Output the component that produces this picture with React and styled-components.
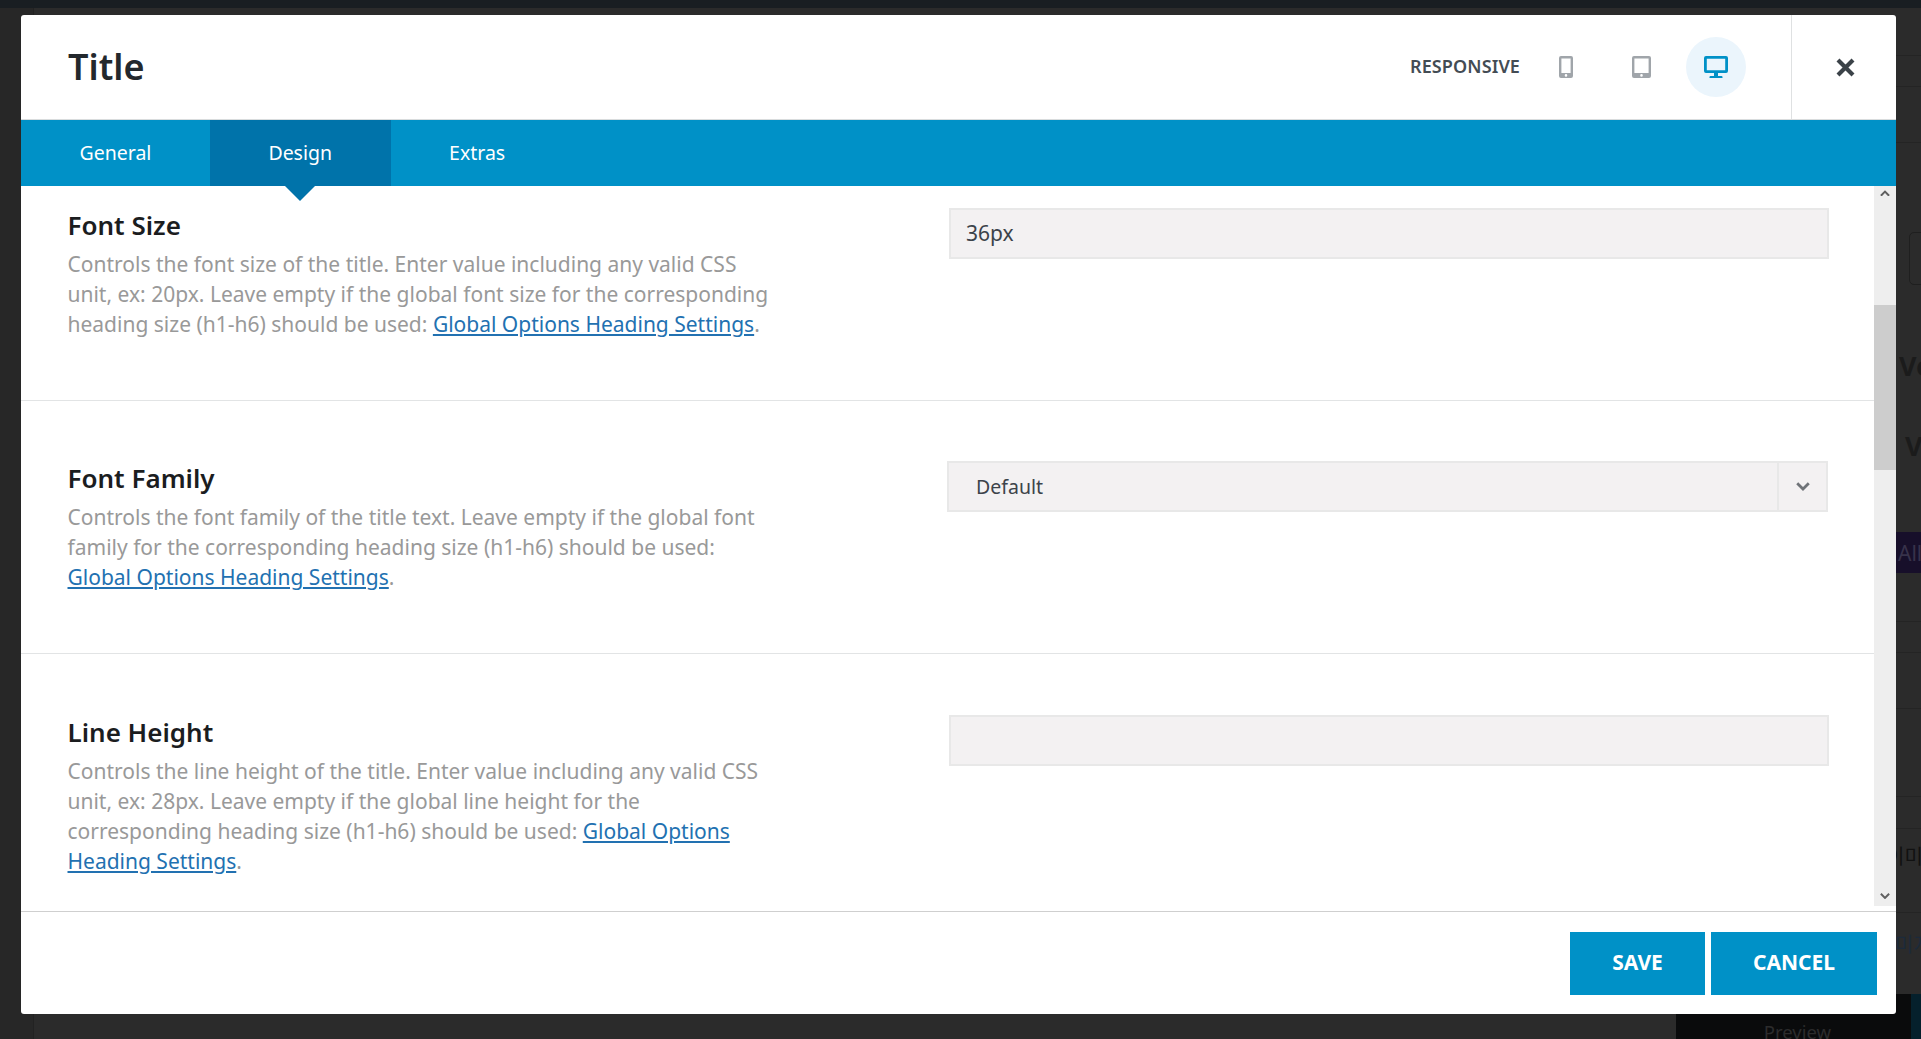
import React from "react";
import styled, { createGlobalStyle } from "styled-components";

const GlobalStyle = createGlobalStyle`
  html, body {
    margin: 0;
    padding: 0;
    height: 100%;
    overflow: hidden;
    background: #2a2a2a;
    font-family: "Noto Sans", "Open Sans", sans-serif;
  }
  * {
    box-sizing: border-box;
  }
`;

const Page = styled.div`
  position: relative;
  display: flex;
  flex-direction: column;
  height: 100vh;
  overflow: hidden;
`;

const AdminBar = styled.div`
  height: 8px;
  flex: none;
  background: #191e22;
`;

const Workspace = styled.div`
  flex: 1;
  display: flex;
  min-height: 0;
`;

const LeftRail = styled.div`
  width: 34px;
  flex: none;
  background: #272727;
  border-right: 1px solid #222;
`;

const Canvas = styled.div`
  flex: 1;
  display: flex;
  flex-direction: column;
  min-width: 0;
`;

const CanvasMain = styled.div`
  flex: 1;
  display: flex;
  justify-content: flex-end;
  min-height: 0;
  background: #2b2b2b;
`;

const EdgeColumn = styled.div`
  width: 25px;
  display: flex;
  flex-direction: column;
  overflow: hidden;
`;

const EdgeRow = styled.div`
  height: ${(p) => p.$h}px;
  flex: none;
  display: flex;
  align-items: center;
  padding-bottom: ${(p) => p.$lift || 0}px;
  white-space: nowrap;
  overflow: hidden;
  background: ${(p) => p.$bg || "transparent"};
  border-bottom: ${(p) => (p.$line ? "1px solid #242424" : "none")};
`;

const EdgeBox = styled.div`
  width: 40px;
  height: 53px;
  margin-left: 13px;
  flex: none;
  border: 1px solid #1f1f1f;
  border-radius: 5px;
`;

const EdgeHeading = styled.span`
  font-size: 27px;
  font-weight: 700;
  color: #1b1b1b;
  padding-left: ${(p) => p.$pad || 0}px;
`;

const EdgeLabel = styled.span`
  font-size: 21px;
  color: #37324a;
  padding-left: 2px;
`;

const EdgeKorean = styled.span`
  font-family: "Noto Sans CJK KR", "Noto Sans", sans-serif;
  font-size: 20px;
  color: ${(p) => p.$color};
  margin-left: ${(p) => p.$shift}px;
`;

const CanvasFooter = styled.div`
  height: 45px;
  flex: none;
  display: flex;
  justify-content: flex-end;
  background: #2b2b2b;
`;

const PreviewBar = styled.div`
  width: 245px;
  display: flex;
  justify-content: space-between;
  background: #0a0b0c;
`;

const PreviewLabel = styled.span`
  flex: 1;
  padding: 24px 0 0 8px;
  text-align: center;
  font-size: 18.5px;
  line-height: 27px;
  color: #2c2c2c;
`;

const PreviewEdge = styled.div`
  width: 10px;
  background: #05202c;
`;

const Modal = styled.div`
  position: absolute;
  top: 15px;
  left: 21px;
  width: 1875px;
  height: 999px;
  display: flex;
  flex-direction: column;
  background: #fff;
  border-radius: 3px;
  overflow: hidden;
`;

const Header = styled.header`
  height: 105px;
  flex: none;
  display: flex;
  align-items: stretch;
  padding-left: 47px;
  border-bottom: 1px solid #d9dcdd;
`;

const Title = styled.h2`
  flex: 1;
  margin: 0;
  align-self: center;
  font-size: 36px;
  font-weight: 600;
  line-height: 48px;
  color: #23282d;
`;

const ResponsiveBar = styled.div`
  display: flex;
  align-items: center;
  gap: 15px;
  margin-right: 45px;
`;

const ResponsiveLabel = styled.span`
  margin: 0 1px 2px 0;
  font-size: 18px;
  font-weight: 600;
  letter-spacing: 0.1px;
  color: #434c54;
`;

const DeviceButton = styled.button`
  width: 60px;
  height: 60px;
  display: flex;
  align-items: center;
  justify-content: center;
  padding: 0;
  border: 0;
  border-radius: 50%;
  background: ${(p) => (p.$active ? "#ebf5fc" : "transparent")};
  color: ${(p) => (p.$active ? "#0091c7" : "#a0a5aa")};
`;

const CloseButton = styled.button`
  width: 105px;
  display: flex;
  align-items: center;
  justify-content: center;
  padding: 0 0 0 2px;
  background: none;
  border: 0;
  border-left: 1px solid #dfe1e2;
  color: #3b4248;
`;

const TabBar = styled.nav`
  position: relative;
  z-index: 1;
  height: 66px;
  flex: none;
  display: flex;
  background: #0091c7;
`;

const Tab = styled.div`
  position: relative;
  display: flex;
  align-items: center;
  padding: 0 58.5px 2px;
  font-size: 19.5px;
  color: #fff;
  background: ${(p) => (p.$active ? "#0073aa" : "transparent")};

  ${(p) =>
    p.$active &&
    `&::after {
      content: "";
      position: absolute;
      left: 50%;
      top: 100%;
      margin-left: -15px;
      border-left: 15px solid transparent;
      border-right: 15px solid transparent;
      border-top: 15px solid #0073aa;
    }`}
`;

const Body = styled.div`
  flex: 1;
  display: flex;
  min-height: 0;
`;

const Options = styled.div`
  flex: 1;
  min-width: 0;
  overflow: hidden;
`;

const Option = styled.section`
  height: ${(p) => p.$h}px;
  display: flex;
  padding: ${(p) => p.$top}px 45px 0 46.5px;
  border-bottom: 1px solid #e2e4e5;
`;

const OptionText = styled.div`
  width: 705.5px;
  margin-top: -1px;
  flex: none;
`;

const OptionName = styled.h3`
  margin: 0 0 6px;
  font-size: 26px;
  font-weight: 600;
  line-height: 36px;
  color: #1b1d1f;
`;

const OptionHelp = styled.p`
  margin: 0;
  font-size: 21px;
  line-height: 30px;
  color: #999;

  a {
    color: #2271b1;
    text-decoration: underline;
  }
`;

const TextField = styled.div`
  width: 880px;
  height: 51px;
  margin-left: auto;
  padding: 0 0 1px 15px;
  display: flex;
  align-items: center;
  font-size: 21px;
  color: #3c434a;
  background: #f3f1f2;
  border: 2px solid #e8e8e8;
`;

const SelectField = styled(TextField)`
  width: 881px;
  margin-right: 1px;
  padding: 0 0 0 27px;
  justify-content: space-between;
  font-size: 19.5px;
`;

const SelectArrow = styled.span`
  width: 49px;
  height: 100%;
  display: flex;
  align-items: center;
  justify-content: center;
  border-left: 2px solid #e8e8e8;
  color: #6f7378;
`;

const Scrollbar = styled.div`
  width: 22px;
  height: 720px;
  flex: none;
  display: flex;
  flex-direction: column;
  background: #eeeeee;
`;

const ScrollArrow = styled.div`
  height: 14px;
  margin: ${(p) => (p.$down ? "auto 0 3px" : "0")};
  display: flex;
  align-items: center;
  justify-content: center;
  color: #606060;
`;

const ScrollThumb = styled.div`
  height: 165px;
  margin-top: 105px;
  flex: none;
  background: #cdcdcd;
`;

const Footer = styled.footer`
  height: 103px;
  flex: none;
  display: flex;
  justify-content: flex-end;
  gap: 6px;
  padding: 20px 19px 0 0;
  border-top: 1px solid #cfcfcf;
`;

const ActionButton = styled.button`
  width: ${(p) => p.$w}px;
  height: 63px;
  padding: 0 0 3px;
  border: 0;
  font-family: inherit;
  font-size: 21px;
  font-weight: 700;
  color: #fff;
  background: #0091c7;
`;

const PhoneIcon = () => (
  <svg width="14" height="22" viewBox="0 0 14 22" fill="currentColor">
    <path d="M2 0h10a2 2 0 0 1 2 2v18a2 2 0 0 1-2 2H2a2 2 0 0 1-2-2V2a2 2 0 0 1 2-2zm.4 2.4V17h9.2V2.4H2.4zM7 18.1a1.3 1.3 0 1 0 0 2.6 1.3 1.3 0 0 0 0-2.6z" fillRule="evenodd" />
  </svg>
);

const TabletIcon = () => (
  <svg width="19" height="22" viewBox="0 0 19 22" fill="currentColor">
    <path d="M2 0h15a2 2 0 0 1 2 2v18a2 2 0 0 1-2 2H2a2 2 0 0 1-2-2V2a2 2 0 0 1 2-2zm.4 2.4V17h14.2V2.4H2.4zm7.1 15.7a1.3 1.3 0 1 0 0 2.6 1.3 1.3 0 0 0 0-2.6z" fillRule="evenodd" />
  </svg>
);

const DesktopIcon = () => (
  <svg width="24" height="22" viewBox="0 0 24 22" fill="currentColor">
    <path d="M2 0h20a2 2 0 0 1 2 2v13a2 2 0 0 1-2 2H2a2 2 0 0 1-2-2V2a2 2 0 0 1 2-2zm.8 2.8v11.4h18.4V2.8H2.8z" fillRule="evenodd" />
    <path d="M10 17h4v3h3.5a1 1 0 0 1 1 1v1h-13v-1a1 1 0 0 1 1-1H10z" />
  </svg>
);

const CloseIcon = () => (
  <svg width="19" height="19" viewBox="0 0 19 19" fill="none" stroke="currentColor" strokeWidth="4.2">
    <path d="M2 2l15 15M17 2L2 17" />
  </svg>
);

const Chevron = ({ size = 14, up }) => (
  <svg width={size} height={size * 0.66} viewBox="0 0 12 8" fill="none" stroke="currentColor" strokeWidth="2.4">
    <path d={up ? "M1 7l5-5 5 5" : "M1 1l5 5 5-5"} />
  </svg>
);

export default function App() {
  return (
    <Page>
      <GlobalStyle />
      <AdminBar />
      <Workspace>
        <LeftRail />
        <Canvas>
          <CanvasMain>
            <EdgeColumn>
              <EdgeRow $h={48} $line />
              <EdgeRow $h={31} $line />
              <EdgeRow $h={56} $line />
              <EdgeRow $h={89} />
              <EdgeRow $h={53}>
                <EdgeBox />
              </EdgeRow>
              <EdgeRow $h={60} />
              <EdgeRow $h={40}>
                <EdgeHeading $pad={3}>Ve</EdgeHeading>
              </EdgeRow>
              <EdgeRow $h={40} />
              <EdgeRow $h={40}>
                <EdgeHeading $pad={9}>V</EdgeHeading>
              </EdgeRow>
              <EdgeRow $h={67} />
              <EdgeRow $h={41} $bg="#170f2a">
                <EdgeLabel>All</EdgeLabel>
              </EdgeRow>
              <EdgeRow $h={49} $line />
              <EdgeRow $h={31} $line />
              <EdgeRow $h={56} $line />
              <EdgeRow $h={88} $line />
              <EdgeRow $h={32} $line />
              <EdgeRow $h={84} $lift={30} $line>
                <EdgeKorean $color="#111" $shift={-10}>이미지</EdgeKorean>
              </EdgeRow>
              <EdgeRow $h={81} $lift={21}>
                <EdgeKorean $color="#1c2a3a" $shift={-1}>미지</EdgeKorean>
              </EdgeRow>
            </EdgeColumn>
          </CanvasMain>
          <CanvasFooter>
            <PreviewBar>
              <PreviewLabel>Preview</PreviewLabel>
              <PreviewEdge />
            </PreviewBar>
          </CanvasFooter>
        </Canvas>
      </Workspace>

      <Modal>
        <Header>
          <Title>Title</Title>
          <ResponsiveBar>
            <ResponsiveLabel>RESPONSIVE</ResponsiveLabel>
            <DeviceButton>
              <PhoneIcon />
            </DeviceButton>
            <DeviceButton>
              <TabletIcon />
            </DeviceButton>
            <DeviceButton $active>
              <DesktopIcon />
            </DeviceButton>
          </ResponsiveBar>
          <CloseButton>
            <CloseIcon />
          </CloseButton>
        </Header>

        <TabBar>
          <Tab>General</Tab>
          <Tab $active>Design</Tab>
          <Tab>Extras</Tab>
        </TabBar>

        <Body>
          <Options>
            <Option $h={215} $top={22}>
              <OptionText>
                <OptionName>Font Size</OptionName>
                <OptionHelp>
                  Controls the font size of the title. Enter value including any valid CSS unit, ex: 20px. Leave empty if
                  the global font size for the corresponding heading size (h1-h6) should be used:{" "}
                  <a href="#options">Global Options Heading Settings</a>.
                </OptionHelp>
              </OptionText>
              <TextField>36px</TextField>
            </Option>
            <Option $h={253} $top={60}>
              <OptionText>
                <OptionName>Font Family</OptionName>
                <OptionHelp>
                  Controls the font family of the title text. Leave empty if the global font family for the corresponding
                  heading size (h1-h6) should be used: <a href="#options">Global Options Heading Settings</a>.
                </OptionHelp>
              </OptionText>
              <SelectField>
                Default
                <SelectArrow>
                  <Chevron />
                </SelectArrow>
              </SelectField>
            </Option>
            <Option $h={283} $top={61}>
              <OptionText>
                <OptionName>Line Height</OptionName>
                <OptionHelp>
                  Controls the line height of the title. Enter value including any valid CSS unit, ex: 28px. Leave empty
                  if the global line height for the corresponding heading size (h1-h6) should be used:{" "}
                  <a href="#options">Global Options Heading Settings</a>.
                </OptionHelp>
              </OptionText>
              <TextField />
            </Option>
          </Options>
          <Scrollbar>
            <ScrollArrow>
              <Chevron size={10} up />
            </ScrollArrow>
            <ScrollThumb />
            <ScrollArrow $down>
              <Chevron size={10} />
            </ScrollArrow>
          </Scrollbar>
        </Body>

        <Footer>
          <ActionButton $w={135}>SAVE</ActionButton>
          <ActionButton $w={166}>CANCEL</ActionButton>
        </Footer>
      </Modal>
    </Page>
  );
}
